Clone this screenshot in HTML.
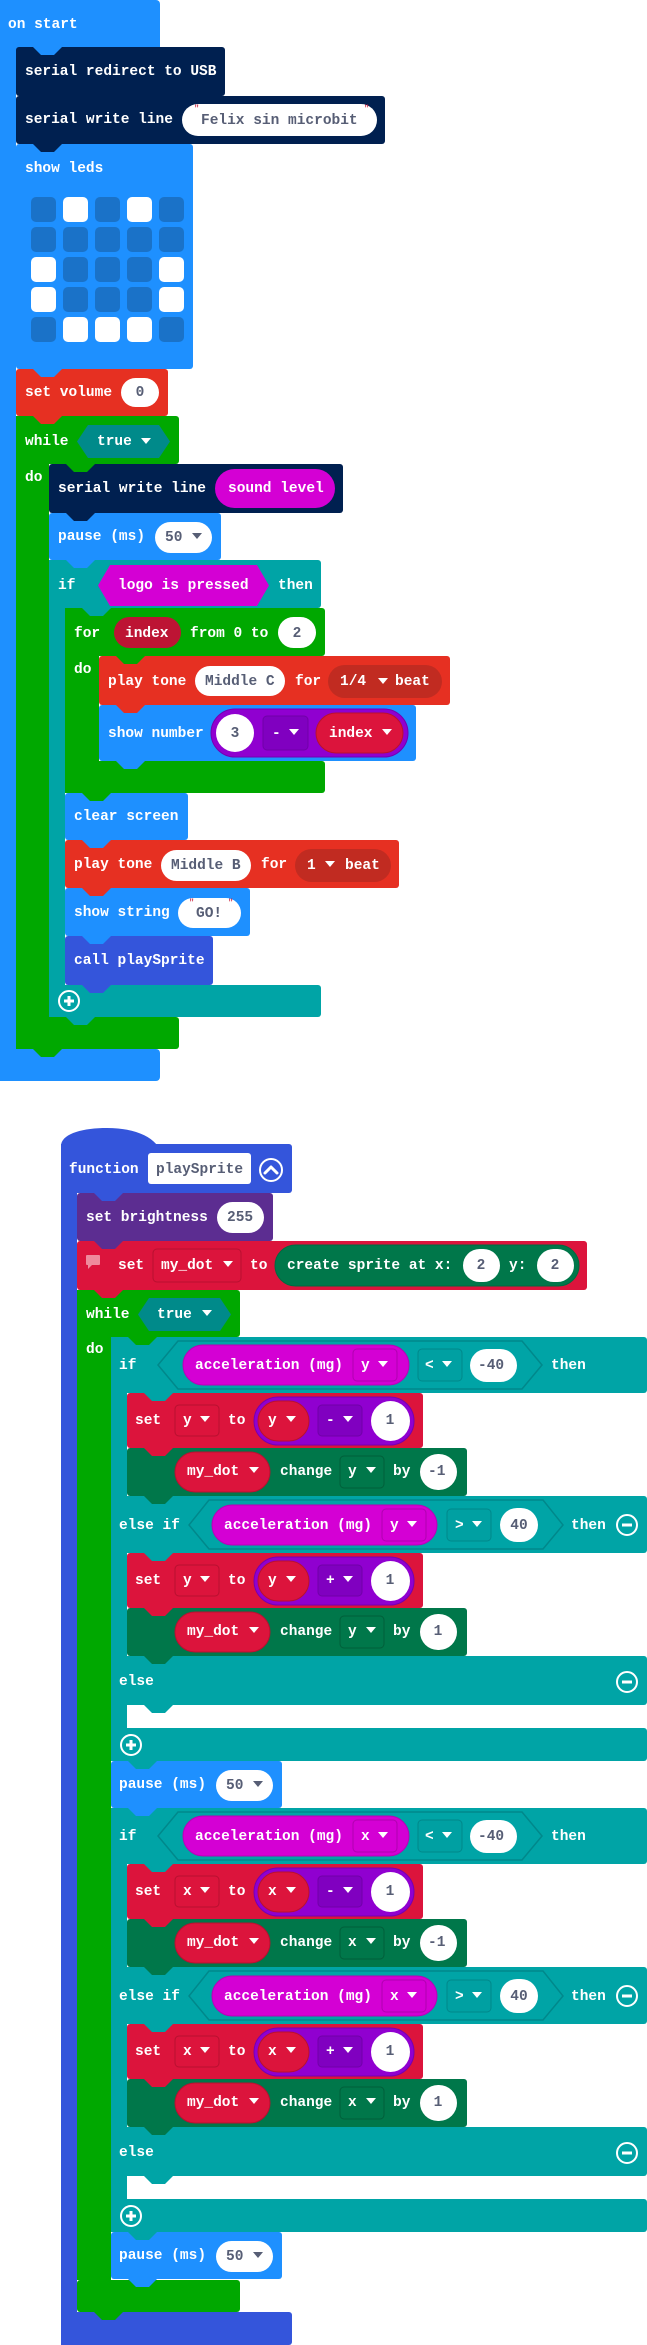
<!DOCTYPE html>
<html><head><meta charset="utf-8"><style>
html,body{margin:0;padding:0;background:#fff;}
svg{display:block}
text{font-family:"Liberation Mono",monospace;font-weight:bold;font-size:14.5px;dominant-baseline:central}
.w{fill:#fff}
.g{fill:#575e75}
.q{fill:#c8102e;font-size:9px;font-weight:normal}
</style></head><body>
<svg width="647" height="2345" viewBox="0 0 647 2345" xmlns="http://www.w3.org/2000/svg">
<defs>
<path id="tab" d="M17,0 L25,8 L38,8 L46,0 Z"/>
<polygon id="tri" points="-5,-3 5,-3 0,3"/>
<g id="plus"><circle r="10" fill="none" stroke="#fff" stroke-width="2"/><path d="M-5,0H5M0,-5V5" stroke="#fff" stroke-width="3"/></g>
<g id="minus"><circle r="10" fill="none" stroke="#fff" stroke-width="2"/><path d="M-5,0H5" stroke="#fff" stroke-width="3"/></g>
</defs>

<!-- ON START -->
<rect x="0" y="0" width="160" height="52" rx="4" fill="#1e90ff"/>
<rect x="0" y="0" width="16" height="1081" fill="#1e90ff"/>
<rect x="0" y="1049" width="160" height="32" rx="4" fill="#1e90ff"/>
<text x="8" y="25" class="w">on start</text>

<rect x="16" y="47" width="209" height="49" rx="3" fill="#002050"/>
<text x="25" y="72" class="w">serial redirect to USB</text>

<rect x="16" y="96" width="369" height="48" rx="3" fill="#002050"/>
<text x="25" y="120" class="w">serial write line</text>
<rect x="182" y="104" width="195" height="32" rx="16" fill="#fff"/>
<text x="194" y="109" class="q">"</text>
<text x="201" y="121" class="g">Felix sin microbit</text>
<text x="364" y="109" class="q">"</text>

<rect x="16" y="144" width="177" height="225" rx="3" fill="#1e90ff"/>
<text x="25" y="169" class="w">show leds</text>
<g>
<rect x="31" y="197" width="25" height="25" rx="5" fill="#1a72c8"/><rect x="63" y="197" width="25" height="25" rx="5" fill="#fff"/><rect x="95" y="197" width="25" height="25" rx="5" fill="#1a72c8"/><rect x="127" y="197" width="25" height="25" rx="5" fill="#fff"/><rect x="159" y="197" width="25" height="25" rx="5" fill="#1a72c8"/>
<rect x="31" y="227" width="25" height="25" rx="5" fill="#1a72c8"/><rect x="63" y="227" width="25" height="25" rx="5" fill="#1a72c8"/><rect x="95" y="227" width="25" height="25" rx="5" fill="#1a72c8"/><rect x="127" y="227" width="25" height="25" rx="5" fill="#1a72c8"/><rect x="159" y="227" width="25" height="25" rx="5" fill="#1a72c8"/>
<rect x="31" y="257" width="25" height="25" rx="5" fill="#fff"/><rect x="63" y="257" width="25" height="25" rx="5" fill="#1a72c8"/><rect x="95" y="257" width="25" height="25" rx="5" fill="#1a72c8"/><rect x="127" y="257" width="25" height="25" rx="5" fill="#1a72c8"/><rect x="159" y="257" width="25" height="25" rx="5" fill="#fff"/>
<rect x="31" y="287" width="25" height="25" rx="5" fill="#fff"/><rect x="63" y="287" width="25" height="25" rx="5" fill="#1a72c8"/><rect x="95" y="287" width="25" height="25" rx="5" fill="#1a72c8"/><rect x="127" y="287" width="25" height="25" rx="5" fill="#1a72c8"/><rect x="159" y="287" width="25" height="25" rx="5" fill="#fff"/>
<rect x="31" y="317" width="25" height="25" rx="5" fill="#1a72c8"/><rect x="63" y="317" width="25" height="25" rx="5" fill="#fff"/><rect x="95" y="317" width="25" height="25" rx="5" fill="#fff"/><rect x="127" y="317" width="25" height="25" rx="5" fill="#fff"/><rect x="159" y="317" width="25" height="25" rx="5" fill="#1a72c8"/>
</g>

<rect x="16" y="369" width="152" height="47" rx="3" fill="#e63022"/>
<text x="25" y="393" class="w">set volume</text>
<rect x="121" y="378" width="38" height="29" rx="14.5" fill="#fff"/>
<text x="140" y="393" class="g" text-anchor="middle">0</text>

<!-- while -->
<rect x="16" y="416" width="163" height="48" rx="3" fill="#00a800"/>
<rect x="16" y="416" width="33" height="633" fill="#00a800"/>
<rect x="16" y="1017" width="163" height="32" rx="3" fill="#00a800"/>
<text x="25" y="442" class="w">while</text>
<text x="25" y="478" class="w">do</text>
<polygon points="77,441.5 88,425 159,425 170,441.5 159,458 88,458" fill="#008a8a"/>
<text x="97" y="442" class="w">true</text>
<use href="#tri" x="146" y="441" fill="#fff"/>

<rect x="49" y="464" width="294" height="49" rx="3" fill="#002050"/>
<text x="58" y="489" class="w">serial write line</text>
<rect x="215" y="469" width="120" height="39" rx="19.5" fill="#d400d4"/>
<text x="228" y="489" class="w">sound level</text>

<rect x="49" y="513" width="172" height="47" rx="3" fill="#1e90ff"/>
<text x="58" y="537" class="w">pause (ms)</text>
<rect x="155" y="522" width="57" height="31" rx="15.5" fill="#fff"/>
<text x="165" y="538" class="g">50</text>
<use href="#tri" x="197" y="536" fill="#575e75"/>

<!-- if -->
<rect x="49" y="560" width="272" height="48" rx="3" fill="#00a4a6"/>
<rect x="49" y="560" width="16" height="457" fill="#00a4a6"/>
<rect x="49" y="985" width="272" height="32" rx="3" fill="#00a4a6"/>
<text x="58" y="586" class="w">if</text>
<polygon points="98,585.5 110,565 257,565 269,585.5 257,606 110,606" fill="#d400d4"/>
<text x="118" y="586" class="w">logo is pressed</text>
<text x="278" y="586" class="w">then</text>
<use href="#plus" x="69" y="1001"/>

<!-- for -->
<rect x="65" y="608" width="260" height="48" rx="3" fill="#00a800"/>
<rect x="65" y="608" width="34" height="185" fill="#00a800"/>
<rect x="65" y="761" width="260" height="32" rx="3" fill="#00a800"/>
<text x="74" y="634" class="w">for</text>
<rect x="114" y="617" width="67" height="31" rx="15.5" fill="#bd1434"/>
<text x="125" y="634" class="w">index</text>
<text x="190" y="634" class="w">from 0 to</text>
<rect x="278" y="617" width="38" height="31" rx="15.5" fill="#fff"/>
<text x="297" y="634" class="g" text-anchor="middle">2</text>
<text x="74" y="670" class="w">do</text>

<rect x="99" y="656" width="351" height="49" rx="3" fill="#e63022"/>
<text x="108" y="682" class="w">play tone</text>
<rect x="195" y="666" width="90" height="30" rx="15" fill="#fff"/>
<text x="205" y="682" class="g">Middle C</text>
<text x="295" y="682" class="w">for</text>
<rect x="328" y="665" width="114" height="33" rx="16.5" fill="#c12b21"/>
<text x="340" y="682" class="w">1/4</text>
<use href="#tri" x="383" y="681" fill="#fff"/>
<text x="395" y="682" class="w">beat</text>

<rect x="99" y="705" width="317" height="56" rx="3" fill="#1e90ff"/>
<text x="108" y="734" class="w">show number</text>
<rect x="211" y="709" width="197" height="48" rx="24" fill="#9000d0" stroke="#7400b0" stroke-width="1"/>
<rect x="216" y="714" width="38" height="38" rx="19" fill="#fff"/>
<text x="235" y="734" class="g" text-anchor="middle">3</text>
<rect x="263" y="716" width="45" height="34" rx="4" fill="#8000c0" stroke="#7000a8"/>
<text x="272" y="734" class="w">-</text>
<use href="#tri" x="294" y="732" fill="#fff"/>
<rect x="316" y="713" width="87" height="40" rx="20" fill="#dc143c" stroke="#b81030"/>
<text x="329" y="734" class="w">index</text>
<use href="#tri" x="387" y="732" fill="#fff"/>

<rect x="65" y="793" width="123" height="47" rx="3" fill="#1e90ff"/>
<text x="74" y="817" class="w">clear screen</text>

<rect x="65" y="840" width="334" height="48" rx="3" fill="#e63022"/>
<text x="74" y="865" class="w">play tone</text>
<rect x="161" y="850" width="90" height="31" rx="15.5" fill="#fff"/>
<text x="171" y="866" class="g">Middle B</text>
<text x="261" y="865" class="w">for</text>
<rect x="295" y="849" width="96" height="33" rx="16.5" fill="#c12b21"/>
<text x="307" y="866" class="w">1</text>
<use href="#tri" x="330" y="864" fill="#fff"/>
<text x="345" y="866" class="w">beat</text>

<rect x="65" y="888" width="185" height="48" rx="3" fill="#1e90ff"/>
<text x="74" y="913" class="w">show string</text>
<rect x="178" y="898" width="63" height="30" rx="15" fill="#fff"/>
<text x="189" y="903" class="q">"</text>
<text x="196" y="914" class="g">GO!</text>
<text x="228" y="903" class="q">"</text>

<rect x="65" y="936" width="148" height="49" rx="3" fill="#3455db"/>
<text x="74" y="961" class="w">call playSprite</text>

<!-- tabs first script -->
<use href="#tab" x="16" y="47" fill="#1e90ff"/>
<use href="#tab" x="16" y="96" fill="#002050"/>
<use href="#tab" x="16" y="144" fill="#002050"/>
<use href="#tab" x="16" y="369" fill="#1e90ff"/>
<use href="#tab" x="16" y="416" fill="#e63022"/>
<use href="#tab" x="16" y="1049" fill="#00a800"/>
<use href="#tab" x="49" y="464" fill="#00a800"/>
<use href="#tab" x="49" y="513" fill="#002050"/>
<use href="#tab" x="49" y="560" fill="#1e90ff"/>
<use href="#tab" x="49" y="1017" fill="#00a4a6"/>
<use href="#tab" x="65" y="608" fill="#00a4a6"/>
<use href="#tab" x="99" y="656" fill="#00a800"/>
<use href="#tab" x="99" y="705" fill="#e63022"/>
<use href="#tab" x="99" y="761" fill="#1e90ff"/>
<use href="#tab" x="65" y="793" fill="#00a800"/>
<use href="#tab" x="65" y="840" fill="#1e90ff"/>
<use href="#tab" x="65" y="888" fill="#e63022"/>
<use href="#tab" x="65" y="936" fill="#1e90ff"/>
<use href="#tab" x="65" y="985" fill="#3455db"/>

<!-- FUNCTION -->
<path d="M61,1146 C61,1134 82,1128 107,1128 C130,1128 148,1134 157,1145 Z" fill="#3455db"/>
<rect x="61" y="1144" width="231" height="49" rx="3" fill="#3455db"/>
<rect x="61" y="1144" width="16" height="1201" fill="#3455db"/>
<rect x="61" y="2312" width="231" height="33" rx="3" fill="#3455db"/>
<text x="69" y="1170" class="w">function</text>
<rect x="148" y="1153" width="103" height="31" rx="3" fill="#fff"/>
<text x="156" y="1170" class="g">playSprite</text>
<circle cx="271" cy="1170" r="11" fill="none" stroke="#fff" stroke-width="2"/>
<path d="M265,1173 L271,1167 L277,1173" fill="none" stroke="#fff" stroke-width="3" stroke-linecap="round" stroke-linejoin="round"/>

<rect x="77" y="1193" width="196" height="48" rx="3" fill="#5c2d91"/>
<text x="86" y="1218" class="w">set brightness</text>
<rect x="217" y="1202" width="47" height="31" rx="15.5" fill="#fff"/>
<text x="227" y="1218" class="g">255</text>

<rect x="77" y="1241" width="510" height="49" rx="3" fill="#dc143c"/>
<rect x="86" y="1255" width="14" height="10" rx="1" fill="#ef8a9c"/>
<path d="M88,1265 L88,1269 L92,1265Z" fill="#ef8a9c"/>
<text x="118" y="1266" class="w">set</text>
<rect x="153" y="1249" width="88" height="33" rx="4" fill="#dc143c" stroke="#b81030"/>
<text x="161" y="1266" class="w">my_dot</text>
<use href="#tri" x="228" y="1264" fill="#fff"/>
<text x="250" y="1266" class="w">to</text>
<rect x="275" y="1245" width="304" height="41" rx="20.5" fill="#00774a" stroke="#006a40"/>
<text x="287" y="1266" class="w">create sprite at x:</text>
<rect x="463" y="1249" width="37" height="33" rx="16.5" fill="#fff"/>
<text x="481" y="1266" class="g" text-anchor="middle">2</text>
<text x="509" y="1266" class="w">y:</text>
<rect x="537" y="1249" width="37" height="33" rx="16.5" fill="#fff"/>
<text x="555" y="1266" class="g" text-anchor="middle">2</text>

<rect x="77" y="1290" width="163" height="47" rx="3" fill="#00a800"/>
<rect x="77" y="1290" width="34" height="990" fill="#00a800"/>
<rect x="77" y="2280" width="163" height="32" rx="3" fill="#00a800"/>
<text x="86" y="1315" class="w">while</text>
<text x="86" y="1350" class="w">do</text>
<polygon points="138,1314.5 149,1298 220,1298 231,1314.5 220,1331 149,1331" fill="#008a8a"/>
<text x="157" y="1315" class="w">true</text>
<use href="#tri" x="207" y="1313" fill="#fff"/>

<!-- if/elseif/else group (y) -->
<g id="grpA">
<rect x="111" y="1337" width="536" height="56" rx="3" fill="#00a4a6"/>
<rect x="111" y="1337" width="16" height="424" fill="#00a4a6"/>
<rect x="111" y="1496" width="536" height="57" rx="3" fill="#00a4a6"/>
<rect x="111" y="1656" width="536" height="49" rx="3" fill="#00a4a6"/>
<rect x="111" y="1728" width="536" height="33" rx="3" fill="#00a4a6"/>
<text x="119" y="1366" class="w">if</text>
<polygon points="158,1365 178,1341 522,1341 542,1365 522,1389 178,1389" fill="#00a4a6" stroke="#00888b" stroke-width="1.5"/>
<rect x="183" y="1345" width="226" height="40" rx="20" fill="#d400d4" stroke="#b800b8"/>
<text x="195" y="1366" class="w">acceleration (mg)</text>
<rect x="353" y="1349" width="44" height="32" rx="4" fill="#d400d4" stroke="#b000b0"/>
<text class="w" x="361" y="1366">y</text>
<use href="#tri" x="383" y="1364" fill="#fff"/>
<rect x="418" y="1349" width="44" height="32" rx="4" fill="#00a0a2" stroke="#00888b"/>
<text x="425" y="1366" class="w">&lt;</text>
<use href="#tri" x="447" y="1364" fill="#fff"/>
<rect x="470" y="1349" width="47" height="33" rx="16.5" fill="#fff"/>
<text x="478" y="1366" class="g">-40</text>
<text x="551" y="1366" class="w">then</text>

<rect x="127" y="1393" width="296" height="55" rx="3" fill="#dc143c"/>
<text x="135" y="1421" class="w">set</text>
<rect x="175" y="1405" width="44" height="31" rx="4" fill="#dc143c" stroke="#b81030"/>
<text x="183" y="1421" class="w">y</text>
<use href="#tri" x="205" y="1419" fill="#fff"/>
<text x="228" y="1421" class="w">to</text>
<rect x="254" y="1397" width="160" height="48" rx="24" fill="#9000d0" stroke="#7400b0"/>
<rect x="258" y="1401" width="51" height="40" rx="20" fill="#dc143c" stroke="#b81030"/>
<text x="268" y="1421" class="w">y</text>
<use href="#tri" x="291" y="1419" fill="#fff"/>
<rect x="318" y="1405" width="44" height="31" rx="4" fill="#8000c0" stroke="#7000a8"/>
<text x="326" y="1421" class="w">-</text>
<use href="#tri" x="348" y="1419" fill="#fff"/>
<rect x="371" y="1401" width="39" height="40" rx="20" fill="#fff"/>
<text x="390" y="1421" class="g" text-anchor="middle">1</text>

<rect x="127" y="1448" width="340" height="48" rx="3" fill="#00774a"/>
<rect x="175" y="1452" width="95" height="40" rx="20" fill="#dc143c" stroke="#b81030"/>
<text x="187" y="1472" class="w">my_dot</text>
<use href="#tri" x="254" y="1470" fill="#fff"/>
<text x="280" y="1472" class="w">change</text>
<rect x="340" y="1456" width="44" height="32" rx="4" fill="#00774a" stroke="#005f3a"/>
<text x="348" y="1472" class="w">y</text>
<use href="#tri" x="371" y="1470" fill="#fff"/>
<text x="393" y="1472" class="w">by</text>
<rect x="420" y="1454" width="37" height="36" rx="18" fill="#fff"/>
<text x="428" y="1472" class="g">-1</text>

<text x="119" y="1526" class="w">else if</text>
<polygon points="189,1525 209,1500 543,1500 563,1525 543,1549 209,1549" fill="#00a4a6" stroke="#00888b" stroke-width="1.5"/>
<rect x="212" y="1505" width="225" height="40" rx="20" fill="#d400d4" stroke="#b800b8"/>
<text x="224" y="1526" class="w">acceleration (mg)</text>
<rect x="382" y="1509" width="44" height="32" rx="4" fill="#d400d4" stroke="#b000b0"/>
<text x="390" y="1526" class="w">y</text>
<use href="#tri" x="412" y="1524" fill="#fff"/>
<rect x="447" y="1509" width="44" height="32" rx="4" fill="#00a0a2" stroke="#00888b"/>
<text x="455" y="1526" class="w">&gt;</text>
<use href="#tri" x="477" y="1524" fill="#fff"/>
<rect x="500" y="1508" width="38" height="34" rx="17" fill="#fff"/>
<text x="519" y="1526" class="g" text-anchor="middle">40</text>
<text x="571" y="1526" class="w">then</text>
<use href="#minus" x="627" y="1525"/>

<rect x="127" y="1553" width="296" height="55" rx="3" fill="#dc143c"/>
<text x="135" y="1581" class="w">set</text>
<rect x="175" y="1565" width="44" height="31" rx="4" fill="#dc143c" stroke="#b81030"/>
<text x="183" y="1581" class="w">y</text>
<use href="#tri" x="205" y="1579" fill="#fff"/>
<text x="228" y="1581" class="w">to</text>
<rect x="254" y="1557" width="160" height="48" rx="24" fill="#9000d0" stroke="#7400b0"/>
<rect x="258" y="1561" width="51" height="40" rx="20" fill="#dc143c" stroke="#b81030"/>
<text x="268" y="1581" class="w">y</text>
<use href="#tri" x="291" y="1579" fill="#fff"/>
<rect x="318" y="1565" width="44" height="31" rx="4" fill="#8000c0" stroke="#7000a8"/>
<text x="326" y="1581" class="w">+</text>
<use href="#tri" x="348" y="1579" fill="#fff"/>
<rect x="371" y="1561" width="39" height="40" rx="20" fill="#fff"/>
<text x="390" y="1581" class="g" text-anchor="middle">1</text>

<rect x="127" y="1608" width="340" height="48" rx="3" fill="#00774a"/>
<rect x="175" y="1612" width="95" height="40" rx="20" fill="#dc143c" stroke="#b81030"/>
<text x="187" y="1632" class="w">my_dot</text>
<use href="#tri" x="254" y="1630" fill="#fff"/>
<text x="280" y="1632" class="w">change</text>
<rect x="340" y="1616" width="44" height="32" rx="4" fill="#00774a" stroke="#005f3a"/>
<text x="348" y="1632" class="w">y</text>
<use href="#tri" x="371" y="1630" fill="#fff"/>
<text x="393" y="1632" class="w">by</text>
<rect x="420" y="1614" width="37" height="36" rx="18" fill="#fff"/>
<text x="438" y="1632" class="g" text-anchor="middle">1</text>

<text x="119" y="1682" class="w">else</text>
<use href="#minus" x="627" y="1682"/>
<use href="#plus" x="131" y="1745"/>

<use href="#tab" x="127" y="1393" fill="#00a4a6"/>
<use href="#tab" x="127" y="1448" fill="#dc143c"/>
<use href="#tab" x="127" y="1496" fill="#00774a"/>
<use href="#tab" x="127" y="1553" fill="#00a4a6"/>
<use href="#tab" x="127" y="1608" fill="#dc143c"/>
<use href="#tab" x="127" y="1656" fill="#00774a"/>
<use href="#tab" x="127" y="1705" fill="#00a4a6"/>
</g>

<rect x="111" y="1761" width="171" height="47" rx="3" fill="#1e90ff"/>
<text x="119" y="1785" class="w">pause (ms)</text>
<rect x="216" y="1770" width="57" height="31" rx="15.5" fill="#fff"/>
<text x="226" y="1786" class="g">50</text>
<use href="#tri" x="258" y="1784" fill="#575e75"/>

<!-- second group (x) -->
<g transform="translate(0,471)">
<rect x="111" y="1337" width="536" height="56" rx="3" fill="#00a4a6"/>
<rect x="111" y="1337" width="16" height="424" fill="#00a4a6"/>
<rect x="111" y="1496" width="536" height="57" rx="3" fill="#00a4a6"/>
<rect x="111" y="1656" width="536" height="49" rx="3" fill="#00a4a6"/>
<rect x="111" y="1728" width="536" height="33" rx="3" fill="#00a4a6"/>
<text x="119" y="1366" class="w">if</text>
<polygon points="158,1365 178,1341 522,1341 542,1365 522,1389 178,1389" fill="#00a4a6" stroke="#00888b" stroke-width="1.5"/>
<rect x="183" y="1345" width="226" height="40" rx="20" fill="#d400d4" stroke="#b800b8"/>
<text x="195" y="1366" class="w">acceleration (mg)</text>
<rect x="353" y="1349" width="44" height="32" rx="4" fill="#d400d4" stroke="#b000b0"/>
<text class="w" x="361" y="1366">x</text>
<use href="#tri" x="383" y="1364" fill="#fff"/>
<rect x="418" y="1349" width="44" height="32" rx="4" fill="#00a0a2" stroke="#00888b"/>
<text x="425" y="1366" class="w">&lt;</text>
<use href="#tri" x="447" y="1364" fill="#fff"/>
<rect x="470" y="1349" width="47" height="33" rx="16.5" fill="#fff"/>
<text x="478" y="1366" class="g">-40</text>
<text x="551" y="1366" class="w">then</text>

<rect x="127" y="1393" width="296" height="55" rx="3" fill="#dc143c"/>
<text x="135" y="1421" class="w">set</text>
<rect x="175" y="1405" width="44" height="31" rx="4" fill="#dc143c" stroke="#b81030"/>
<text x="183" y="1421" class="w">x</text>
<use href="#tri" x="205" y="1419" fill="#fff"/>
<text x="228" y="1421" class="w">to</text>
<rect x="254" y="1397" width="160" height="48" rx="24" fill="#9000d0" stroke="#7400b0"/>
<rect x="258" y="1401" width="51" height="40" rx="20" fill="#dc143c" stroke="#b81030"/>
<text x="268" y="1421" class="w">x</text>
<use href="#tri" x="291" y="1419" fill="#fff"/>
<rect x="318" y="1405" width="44" height="31" rx="4" fill="#8000c0" stroke="#7000a8"/>
<text x="326" y="1421" class="w">-</text>
<use href="#tri" x="348" y="1419" fill="#fff"/>
<rect x="371" y="1401" width="39" height="40" rx="20" fill="#fff"/>
<text x="390" y="1421" class="g" text-anchor="middle">1</text>

<rect x="127" y="1448" width="340" height="48" rx="3" fill="#00774a"/>
<rect x="175" y="1452" width="95" height="40" rx="20" fill="#dc143c" stroke="#b81030"/>
<text x="187" y="1472" class="w">my_dot</text>
<use href="#tri" x="254" y="1470" fill="#fff"/>
<text x="280" y="1472" class="w">change</text>
<rect x="340" y="1456" width="44" height="32" rx="4" fill="#00774a" stroke="#005f3a"/>
<text x="348" y="1472" class="w">x</text>
<use href="#tri" x="371" y="1470" fill="#fff"/>
<text x="393" y="1472" class="w">by</text>
<rect x="420" y="1454" width="37" height="36" rx="18" fill="#fff"/>
<text x="428" y="1472" class="g">-1</text>

<text x="119" y="1526" class="w">else if</text>
<polygon points="189,1525 209,1500 543,1500 563,1525 543,1549 209,1549" fill="#00a4a6" stroke="#00888b" stroke-width="1.5"/>
<rect x="212" y="1505" width="225" height="40" rx="20" fill="#d400d4" stroke="#b800b8"/>
<text x="224" y="1526" class="w">acceleration (mg)</text>
<rect x="382" y="1509" width="44" height="32" rx="4" fill="#d400d4" stroke="#b000b0"/>
<text x="390" y="1526" class="w">x</text>
<use href="#tri" x="412" y="1524" fill="#fff"/>
<rect x="447" y="1509" width="44" height="32" rx="4" fill="#00a0a2" stroke="#00888b"/>
<text x="455" y="1526" class="w">&gt;</text>
<use href="#tri" x="477" y="1524" fill="#fff"/>
<rect x="500" y="1508" width="38" height="34" rx="17" fill="#fff"/>
<text x="519" y="1526" class="g" text-anchor="middle">40</text>
<text x="571" y="1526" class="w">then</text>
<use href="#minus" x="627" y="1525"/>

<rect x="127" y="1553" width="296" height="55" rx="3" fill="#dc143c"/>
<text x="135" y="1581" class="w">set</text>
<rect x="175" y="1565" width="44" height="31" rx="4" fill="#dc143c" stroke="#b81030"/>
<text x="183" y="1581" class="w">x</text>
<use href="#tri" x="205" y="1579" fill="#fff"/>
<text x="228" y="1581" class="w">to</text>
<rect x="254" y="1557" width="160" height="48" rx="24" fill="#9000d0" stroke="#7400b0"/>
<rect x="258" y="1561" width="51" height="40" rx="20" fill="#dc143c" stroke="#b81030"/>
<text x="268" y="1581" class="w">x</text>
<use href="#tri" x="291" y="1579" fill="#fff"/>
<rect x="318" y="1565" width="44" height="31" rx="4" fill="#8000c0" stroke="#7000a8"/>
<text x="326" y="1581" class="w">+</text>
<use href="#tri" x="348" y="1579" fill="#fff"/>
<rect x="371" y="1561" width="39" height="40" rx="20" fill="#fff"/>
<text x="390" y="1581" class="g" text-anchor="middle">1</text>

<rect x="127" y="1608" width="340" height="48" rx="3" fill="#00774a"/>
<rect x="175" y="1612" width="95" height="40" rx="20" fill="#dc143c" stroke="#b81030"/>
<text x="187" y="1632" class="w">my_dot</text>
<use href="#tri" x="254" y="1630" fill="#fff"/>
<text x="280" y="1632" class="w">change</text>
<rect x="340" y="1616" width="44" height="32" rx="4" fill="#00774a" stroke="#005f3a"/>
<text x="348" y="1632" class="w">x</text>
<use href="#tri" x="371" y="1630" fill="#fff"/>
<text x="393" y="1632" class="w">by</text>
<rect x="420" y="1614" width="37" height="36" rx="18" fill="#fff"/>
<text x="438" y="1632" class="g" text-anchor="middle">1</text>

<text x="119" y="1682" class="w">else</text>
<use href="#minus" x="627" y="1682"/>
<use href="#plus" x="131" y="1745"/>

<use href="#tab" x="127" y="1393" fill="#00a4a6"/>
<use href="#tab" x="127" y="1448" fill="#dc143c"/>
<use href="#tab" x="127" y="1496" fill="#00774a"/>
<use href="#tab" x="127" y="1553" fill="#00a4a6"/>
<use href="#tab" x="127" y="1608" fill="#dc143c"/>
<use href="#tab" x="127" y="1656" fill="#00774a"/>
<use href="#tab" x="127" y="1705" fill="#00a4a6"/>

<rect x="111" y="1761" width="171" height="47" rx="3" fill="#1e90ff"/>
<text x="119" y="1785" class="w">pause (ms)</text>
<rect x="216" y="1770" width="57" height="31" rx="15.5" fill="#fff"/>
<text x="226" y="1786" class="g">50</text>
<use href="#tri" x="258" y="1784" fill="#575e75"/>
<use href="#tab" x="111" y="1761" fill="#00a4a6"/>
<use href="#tab" x="111" y="1808" fill="#1e90ff"/>
</g>

<!-- tabs function -->
<use href="#tab" x="77" y="1193" fill="#3455db"/>
<use href="#tab" x="77" y="1241" fill="#5c2d91"/>
<use href="#tab" x="77" y="1290" fill="#dc143c"/>
<use href="#tab" x="111" y="1337" fill="#00a800"/>
<use href="#tab" x="111" y="1761" fill="#00a4a6"/>
<use href="#tab" x="111" y="1808" fill="#1e90ff"/>
<use href="#tab" x="77" y="2312" fill="#00a800"/>
</svg>
</body></html>
